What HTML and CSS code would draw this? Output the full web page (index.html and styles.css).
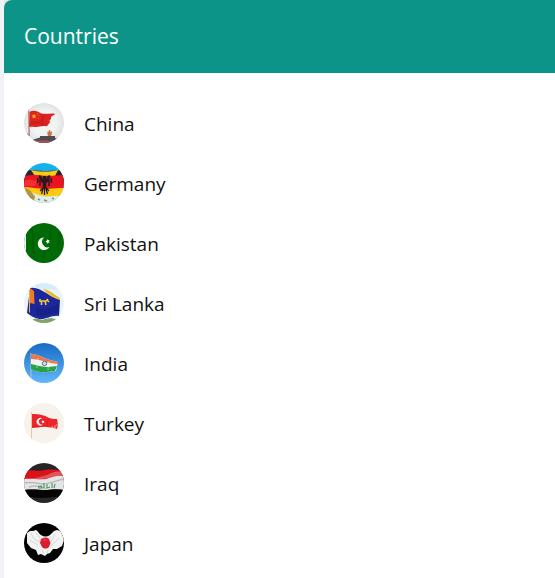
FILE: index.html
```html
<!DOCTYPE html>
<html lang="en">
<head>
<meta charset="utf-8">
<meta name="viewport" content="width=device-width, initial-scale=1">
<title>Countries</title>
<link rel="stylesheet" href="styles.css">
</head>
<body>
<main class="card">
  <header class="card-header"><h1 class="title">Countries</h1></header>
  <ul class="list">
    <li class="row">
      <svg class="flag" viewBox="0 0 40 40" aria-hidden="true">
        <defs><radialGradient id="mist"><stop offset=".6" stop-color="#f1f4f3"/><stop offset="1" stop-color="#dfe3e2"/></radialGradient></defs>
        <rect width="40" height="40" fill="url(#mist)"/>
        <path d="M4 6h1.200l.8 27H4.500z" fill="#b98482"/>
        <path d="M5.500 9c4-2.500 8-.5 12 1.500 4 1 8-.5 12.500 0l1 .8-4 2.500v2l-1.500 2 .5 1.500-3 4c-5-1-8 .5-11 .7-3 .3-4-.5-7 0z" fill="#dc2320"/>
        <path d="M17 12c2 3-1 7 0 11l3-.5c-2-3 1-6 0-10zM7 18c4 2 7 0 11-1l-2 3c-3 1-6 1-9 0z" fill="#b51518" opacity=".4"/>
        <path d="M10 10.500l.8 1.700 1.900.2-1.400 1.300.4 1.900-1.700-.9-1.600.9.300-1.900-1.400-1.300 1.900-.2z" fill="#f6a21e"/>
        <path d="M13 10l1 .7-1 .6zM14.500 12l1 .6-1 .7zM14 15l1 .6-1 .6z" fill="#f6a21e"/>
        <path d="M25 27h1l.5 2 2-.5-1 2 .7 1-1.200.8v2h-3v-2l-1-1 .8-1-1-1.800 1.700.5z" fill="#c9763f"/>
        <path d="M6 38l5-2 5-1.500V33h15v2l7 2v4H6z" fill="#514c4f"/>
        <path d="M10 37.500h13l4 1V41H10z" fill="#a45357"/><path d="M1 29l3 2 1 4-3-1z" fill="#633b3d"/>
      </svg><span>China</span>
    </li>
    <li class="row">
      <svg class="flag" viewBox="0 0 40 40" aria-hidden="true">
        <rect width="40" height="40" fill="#14b1ee"/>
        <path d="M0 7c8 0 14 1 23 1l17-1v12H0z" fill="#30242a"/>
        <path d="M7 7c9 2 19 2 27 0l-3 6H11z" fill="#f5cb16"/>
        <path d="M0 13c4-1 8-1 12-1 8 1 16 1 28 0v15H0z" fill="#ea1420"/>
        <path d="M1 18c5-3 9 1 13-1l-3 6H0z" fill="#ff4a42" opacity=".5"/>
        <path d="M0 24c6 0 14 2 24 2 6-1 12-1 16-1v8c-6-1-10 1-17 1-9 0-15-4-23-8z" fill="#ffc90c"/>
        <path d="M0 25c7 4 14 8 23 8.500 6 0 11-1 17-.5v7H0z" fill="#dfecec"/>
        <path d="M1 25c7 2 7 6 10 8l-1 6-9-7z" fill="#bd9141"/>
        <path d="M6 34l3 1M14 36l2 1M20 37l3 1M28 35l2 1" stroke="#8b964f" stroke-width="1.500"/>
        <g fill="none" stroke="#211b20">
          <path d="M20.500 13v12" stroke-width="3.500"/>
          <path d="M19 19c-2-1-1-5-4-6M22 19c2-1 1-5 4-6" stroke-width="2.500"/>
          <path d="M16 16v7M14 15l-.5 5M25 16v7M27 15l.5 5" stroke-width="1.500"/>
          <path d="M20 24l-4 4M21 24l4 4M20.500 24v8M19 26l-1.500 5M22 26l1.500 5" stroke-width="1.300"/>
        </g>
      </svg><span>Germany</span>
    </li>
    <li class="row">
      <svg class="flag" viewBox="0 0 40 40" aria-hidden="true">
        <rect width="40" height="40" fill="#006b06"/>
        <path d="M0 0h2v40H0z" fill="#f3f6f3"/>
        <path d="M8 4l2 31M20 28l-1 12M27 4l-1 12M35 10l-1 18" stroke="#004f08" stroke-width="1.500" opacity=".5"/>
        <path d="M20 14.500a6.300 6.300 0 1 0 5.500 9.500A5.600 5.600 0 0 1 20 14.500z" fill="#f1f8f0"/>
        <path d="M23 16l1 1.300 1.700-.3-.9 1.500.9 1.500-1.700-.4-1 1.300-.2-1.700-1.500-.8 1.600-.7z" fill="#fff"/>
      </svg><span>Pakistan</span>
    </li>
    <li class="row">
      <svg class="flag" viewBox="0 0 40 40" aria-hidden="true">
        <rect width="40" height="40" fill="#e8f5fb"/>
        <path d="M6 0h27v7L13 5z" fill="#d8edfa"/>
        <path d="M6 5c8-1 14 4 21 8 4 1 7 2 9 4l-1 16c-8-1-13 4-20 3-5-1-8-3-12-6z" fill="#1c279c"/>
        <path d="M12 25c8 3 15 0 23-4v9c-8-2-14 5-23 2z" fill="#111b70" opacity=".5"/>
        <path d="M19 6c5 0 11 5 17 9v2c-7-2-12-5-17-11z" fill="#e9bd35"/>
        <path d="M6 5l4 3 .5 13-4.500-1z" fill="#f47a25"/>
        <path d="M5 7l1-1v24l-1-1z" fill="#e5b24a"/>
        <path d="M17 18h5l2-2M17.500 18v4M21 18l1 4M23 17l2 2M16 19v-3" fill="none" stroke="#f4cc37" stroke-width="1.600"/>
        <path d="M8 37c5-3 7-1 10 0 5-2 6-1 9-2l8 2-5 4H10z" fill="#84a263"/>
      </svg><span>Sri Lanka</span>
    </li>
    <li class="row">
      <svg class="flag" viewBox="0 0 40 40" aria-hidden="true">
        <defs><linearGradient id="sky" x2="0" y2="1"><stop stop-color="#176bc4"/><stop offset="1" stop-color="#62b7fb"/></linearGradient></defs>
        <rect width="40" height="40" fill="url(#sky)"/>
        <path d="M7 10v30" stroke="#abc4dc" stroke-width="1"/>
        <path d="M7 11c7 0 12 4 19 6 3 1 5 1 8 2l-2 9c-6 0-10 2-16 1-3-1-6-1-9-3z" fill="#f0f2f2"/>
        <path d="M7 11c7 0 12 4 19 6 3 1 5 1 8 2v2c-5-1-10-1-15-3-4-1-7-2-12-2z" fill="#e87850"/>
        <path d="M7 21c6 1 11 3 17 3 4 0 6-1 9-1l-2 5c-6 0-10 2-15 1-3-1-6-1-9-3z" fill="#28a343"/>
        <circle cx="20.500" cy="20.500" r="2.200" fill="#d5dbe9" stroke="#5d729d"/>
        <path d="M25 18l-1 9M14 15l-1 10" stroke="#fff" stroke-width="2" opacity=".25"/>
      </svg><span>India</span>
    </li>
    <li class="row">
      <svg class="flag" viewBox="0 0 40 40" aria-hidden="true">
        <rect width="40" height="40" fill="#f7f2ec"/>
        <path d="M7.500 9v29" stroke="#decbad" stroke-width="1"/>
        <path d="M8 11c8 0 12 1 17 4 3 1 6 1 8 1l1 6-1 4c-4-2-7-1-10-2-6-1-9 1-15 1z" fill="#ed252a"/>
        <path d="M24 15l-1 9M9 23c7 1 9 0 15 0" stroke="#bd171c" fill="none" opacity=".35"/>
        <path d="M18.500 15.700a3.700 3.700 0 1 0 .4 5.700 3 3 0 1 1-.4-5.700z" fill="#fff"/>
        <path d="M18.500 17l.7 1 1.200-.1-.6 1 .7 1-1.300-.2-.8.900-.1-1.300-1-.6 1.100-.5z" fill="#fff"/>
        <path d="M28 23l1 2M31 22l0 3M33 21l0 2" stroke="#f6a7a4"/>
      </svg><span>Turkey</span>
    </li>
    <li class="row">
      <svg class="flag" viewBox="0 0 40 40" aria-hidden="true">
        <rect width="40" height="40" fill="#262626"/>
        <path d="M0 8c9-2 14 1 21-1 7-1 12 0 19 1v8c-9-1-14 1-20 1-8 1-12-1-20 0z" fill="#dd1119"/>
        <path d="M0 16c9-1 14 1 22 0 7-2 11-4 18-3v14c-9-1-13 0-20 0-7 0-11-1-20 0z" fill="#e5e5e5"/>
        <path d="M0 20c8-2 14 1 19 1s12-3 21-5M5 24c8-2 14 0 17 2" fill="none" stroke="#888" stroke-width="1.500" opacity=".45"/>
        <path d="M2 17c10-2 20-4 28-8l8-1v4c-9 2-19 5-36 5z" fill="#ddd" opacity=".35"/>
        <path d="M0 27c9-1 15 0 23 0 6-1 11-1 17 0v7c-10-1-14 1-22 1-7 0-12-2-18-1z" fill="#050505"/>
        <path d="M14 24l3-1 1 2h-4M20 20v5M23 21v4l3-1M28 20v5M31 21l-1 4" fill="none" stroke="#47a060" stroke-width="1.200"/>
      </svg><span>Iraq</span>
    </li>
    <li class="row">
      <svg class="flag" viewBox="0 0 40 40" aria-hidden="true">
        <rect width="40" height="40" fill="#030303"/>
        <path d="M3 10l3-2 3 0 3-1c2 1 3 4 5 5 3 2 6 2 9 0l4-4 3-1 3 1 2 2 2 7-2 6-5 3-4 0-3 4-3 1-2 2-4-2-3 1-2-5-5-2-4-5z" fill="#f3f3f3"/>
        <path d="M7 10l3 6 6 3M12 10l4 5M6 17l8 5M27 13l-2 3M31 11l-4 8M35 15l-8 8M18 27l2 4M24 27l-1 4" fill="none" stroke="#999" opacity=".3"/>
        <path d="M17 16c3-2 6-2 8 0l1.500 4-1.500 4c-2 2-5 2-7 0l-2-4z" fill="#d91c2e"/>
        <path d="M18 17l3-1 3 1-3 1z" fill="#f3545a" opacity=".6"/>
      </svg><span>Japan</span>
    </li>
  </ul>
</main>
</body>
</html>
```
FILE: styles.css
```css
* {
  box-sizing: border-box;
}

body {
  margin: 0 0 0 4px;
  background: #f0f2f5;
  color: #111;
  font-family: "Segoe UI", "Open Sans", sans-serif;
}

.card {
  min-height: 100vh;
  overflow: hidden;
  border-radius: 8px 0 0 0;
  background: #fff;
  box-shadow: 0 0 8px rgba(0, 0, 0, 0.15);
}

.card-header {
  padding: 20px;
  background: #0d9488;
  color: #fff;
}

.title {
  margin: 0;
  font-size: 21px;
  font-weight: 400;
  line-height: 33px;
}

.list {
  display: grid;
  gap: 18px;
  margin: 0;
  padding: 30px 20px 13px;
  list-style: none;
}

.row {
  display: flex;
  align-items: flex-start;
  gap: 20px;
  font-size: 19px;
  line-height: 42px;
}

.flag {
  flex: none;
  width: 40px;
  height: 40px;
  overflow: hidden;
  border-radius: 50%;
}
```
